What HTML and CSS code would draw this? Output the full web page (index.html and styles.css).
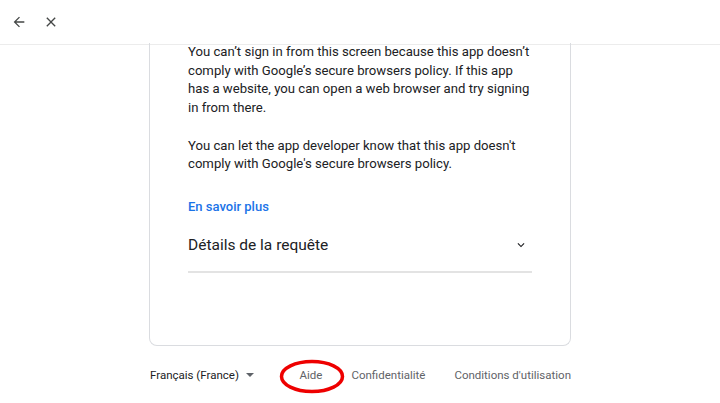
FILE: index.html
```html
<!DOCTYPE html>
<html lang="fr">
<head>
  <meta charset="UTF-8" />
  <meta name="viewport" content="width=device-width, initial-scale=1.0"/>
  <title>Connexion impossible</title>
  <link rel="stylesheet" href="styles.css">
</head>
<body>
  <header class="topbar">
    <button class="icon-btn" aria-label="Retour">
      <svg width="16" height="16" viewBox="0 0 24 24"><path d="M20 11H7.83l5.59-5.59L12 4l-8 8 8 8 1.41-1.41L7.83 13H20v-2z" fill="#444746"/></svg>
    </button>
    <button class="icon-btn" aria-label="Fermer">
      <svg width="16" height="16" viewBox="0 0 24 24"><path d="M19 6.41L17.59 5 12 10.59 6.41 5 5 6.41 10.59 12 5 17.59 6.41 19 12 13.41 17.59 19 19 17.59 13.41 12z" fill="#444746"/></svg>
    </button>
  </header>

  <main class="page">
    <div class="card">
      <p>You can’t sign in from this screen because this app doesn’t comply with Google’s secure browsers policy. If this app has a website, you can open a web browser and try signing in from there.</p>
      <p>You can let the app developer know that this app doesn't comply with Google's secure browsers policy.</p>

      <a class="learn-more" href="#">En savoir plus</a>

      <div class="details">
        <span>Détails de la requête</span>
        <svg width="14" height="14" viewBox="0 0 24 24"><path d="M7.41 8.59L12 13.17l4.59-4.58L18 10l-6 6-6-6 1.41-1.41z" fill="#202124"/></svg>
      </div>
    </div>

    <footer class="footer">
      <div class="lang">
        Français (France)
        <svg width="10" height="10" viewBox="0 0 10 10"><path d="M1 3h8L5 7z" fill="#5f6368"/></svg>
      </div>
      <nav class="links">
        <a href="#" class="help">Aide
          <svg class="circle" width="66" height="35" viewBox="0 0 66 35"><ellipse cx="33" cy="17.5" rx="30.5" ry="15" fill="none" stroke="#ee0000" stroke-width="3.5"/></svg>
        </a>
        <a href="#">Confidentialité</a>
        <a href="#">Conditions d'utilisation</a>
      </nav>
    </footer>
  </main>
</body>
</html>
```

FILE: styles.css
```css
body {
  margin: 0;
  font-family: Roboto, "Liberation Sans", sans-serif;
  color: #202124;
  background: #fff;
}
.topbar {
  height: 44px;
  display: flex;
  align-items: center;
  gap: 16px;
  padding-left: 11px;
  border-bottom: 1px solid #ececec;
}
.icon-btn {
  border: none;
  background: none;
  padding: 0;
  width: 16px;
  height: 16px;
  display: flex;
}
.page {
  width: 422px;
  margin: 0 auto;
}
.card {
  border: 1px solid #dadce0;
  border-top: none;
  border-radius: 0 0 8px 8px;
  padding: 0 38px 72px;
  margin-top: -2px;
}
.card p {
  margin: 0 0 18.7px;
  font-size: 13.15px;
  line-height: 18.7px;
}
.learn-more {
  display: block;
  margin-top: 25px;
  color: #1a73e8;
  font-size: 13px;
  font-weight: 500;
  text-decoration: none;
}
.details {
  display: flex;
  justify-content: space-between;
  align-items: center;
  margin-top: 22px;
  padding: 0 4px 17px 0;
  font-size: 15.5px;
  border-bottom: 2px solid #e3e3e3;
}
.footer {
  display: flex;
  align-items: center;
  height: 58px;
  padding-left: 1px;
  font-size: 11.5px;
}
.lang {
  display: flex;
  align-items: center;
  gap: 6px;
}
.links {
  margin-left: auto;
  display: flex;
  gap: 29px;
}
.links a {
  color: #5f6368;
  text-decoration: none;
}
.help {
  position: relative;
}
.help .circle {
  position: absolute;
  left: -21px;
  top: -9px;
}
```
